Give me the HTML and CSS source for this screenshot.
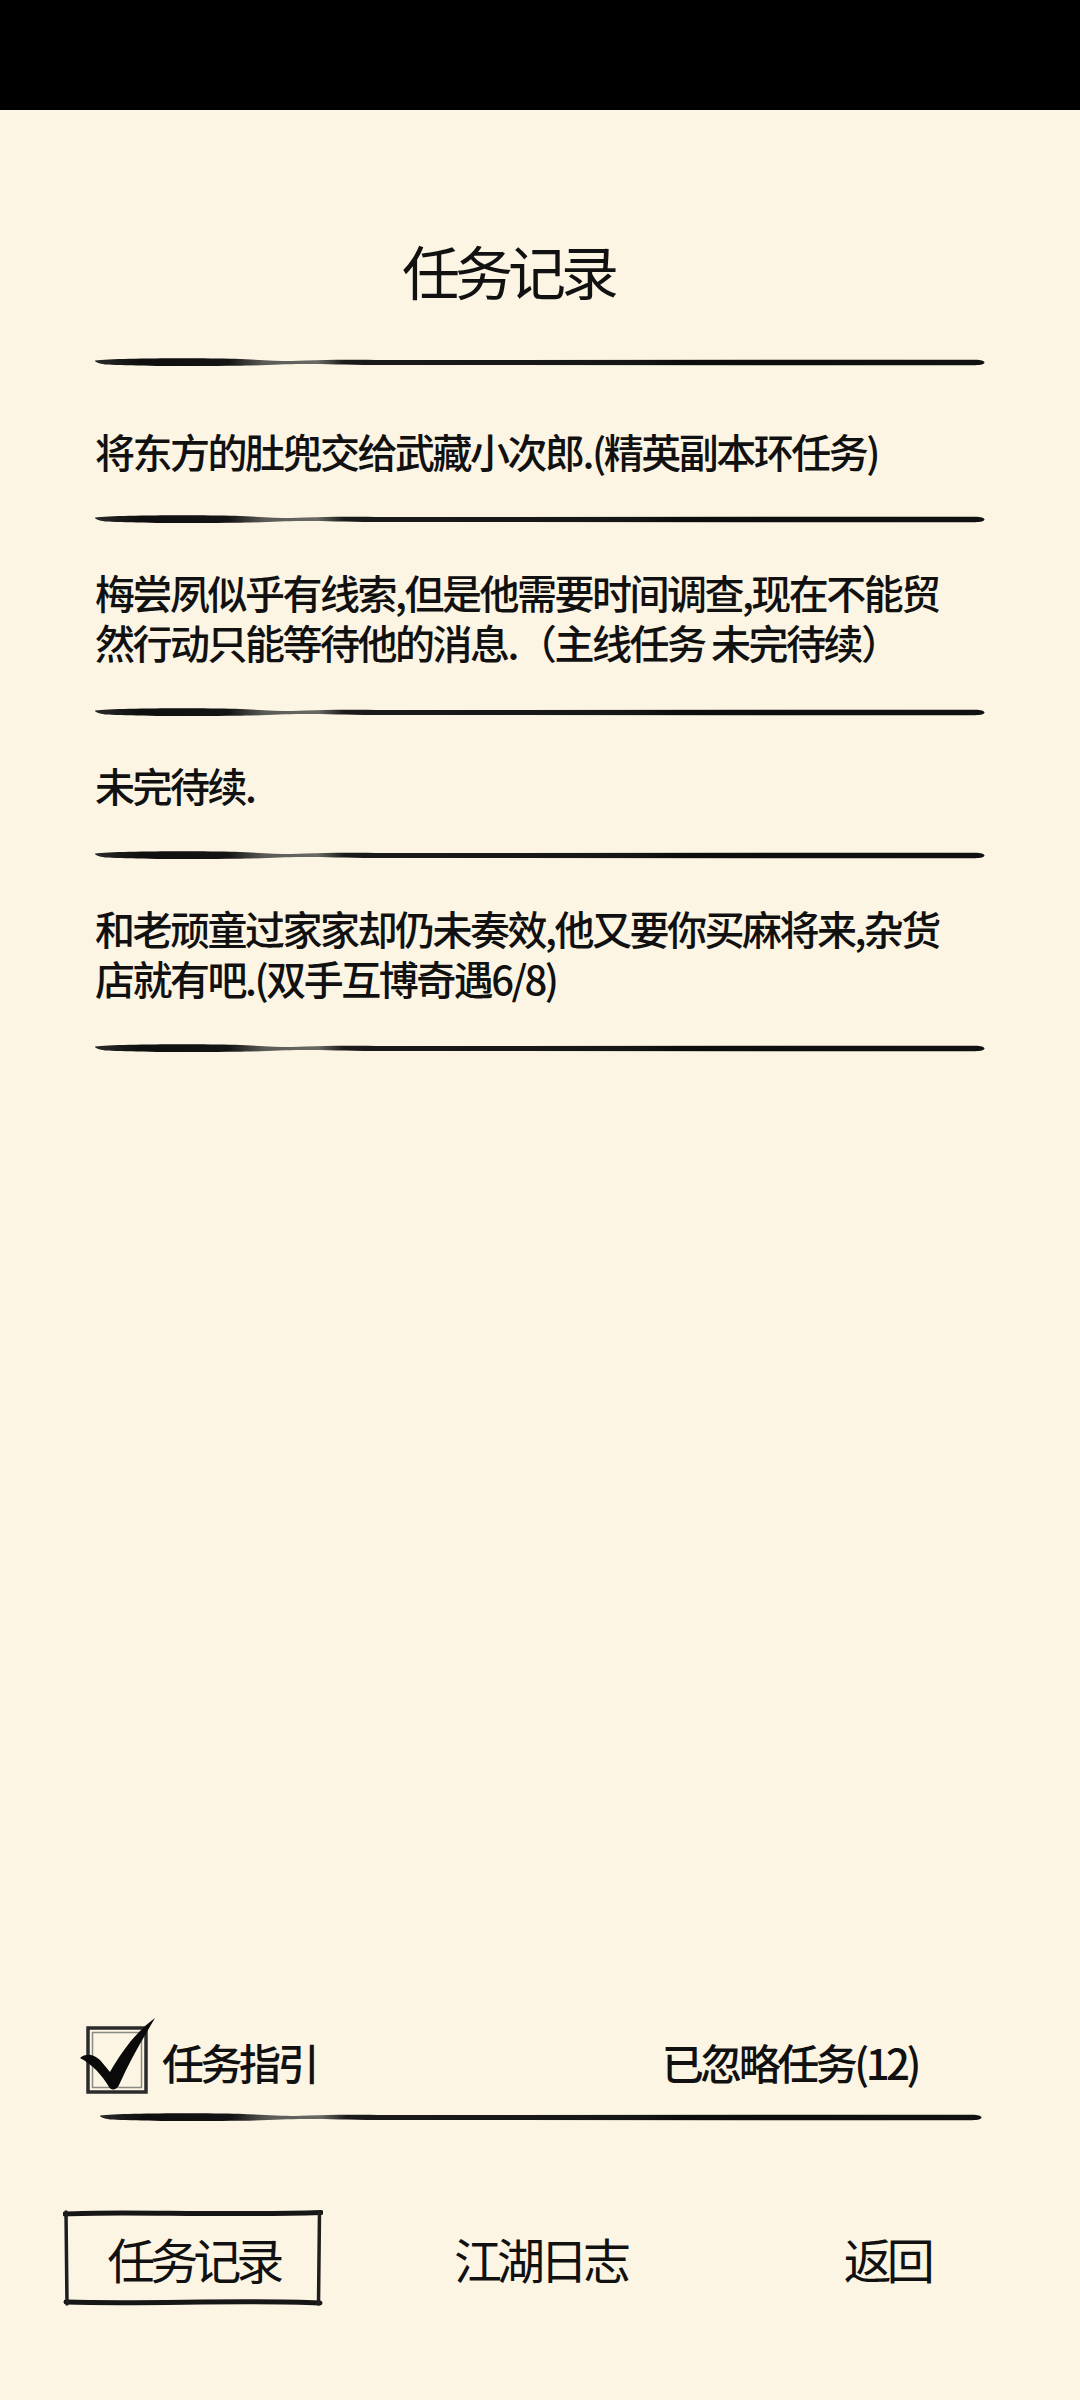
FILE: index.html
```html
<!DOCTYPE html>
<html lang="zh-CN">
<head>
<meta charset="utf-8">
<title>任务记录</title>
<link rel="stylesheet" href="styles.css">
</head>
<body>
<svg class="defs" width="0" height="0" aria-hidden="true">
  <defs>
    <linearGradient id="ink" x1="0" y1="0" x2="1" y2="0">
      <stop offset="0" stop-color="#2a2a2a"/>
      <stop offset="0.05" stop-color="#0e0e0e"/>
      <stop offset="0.15" stop-color="#141414"/>
      <stop offset="0.19" stop-color="#5a5a56"/>
      <stop offset="0.25" stop-color="#6a6a64"/>
      <stop offset="0.28" stop-color="#1a1a1a"/>
      <stop offset="0.6" stop-color="#161616"/>
      <stop offset="0.66" stop-color="#0c0c0c"/>
      <stop offset="1" stop-color="#111"/>
    </linearGradient>
    <symbol id="brush" viewBox="0 0 890 10" preserveAspectRatio="none">
      <path d="M0 3.6 C20 1 100 0.8 140 1.8 C170 3 190 4.6 210 3.6 C230 2.8 250 2.6 280 3 L880 2.8 C886 2.8 889.5 4 889.5 5.6 C889.5 7.2 886 8.2 880 8.2 L280 8 C250 7.8 230 7.2 210 7 C190 6.8 170 8.4 140 8.8 C100 9.4 30 8.8 10 7.4 C4 6.8 0 5.4 0 3.6 Z" fill="url(#ink)"/>
    </symbol>
  </defs>
</svg>

<div class="screen">
  <div class="status-bar"></div>

  <main class="main">
    <h1 class="title">任务记录</h1>
    <div class="list">
      <svg class="divider"><use href="#brush"/></svg>
      <div class="quest quest-first">将东方的肚兜交给武藏小次郎.(精英副本环任务)</div>
      <svg class="divider"><use href="#brush"/></svg>
      <div class="quest">梅尝夙似乎有线索,但是他需要时间调查,现在不能贸然行动只能等待他的消息.（主线任务 未完待续）</div>
      <svg class="divider"><use href="#brush"/></svg>
      <div class="quest">未完待续.</div>
      <svg class="divider"><use href="#brush"/></svg>
      <div class="quest">和老顽童过家家却仍未奏效,他又要你买麻将来,杂货店就有吧.(双手互博奇遇6/8)</div>
      <svg class="divider"><use href="#brush"/></svg>
    </div>
  </main>

  <footer class="footer">
    <div class="options">
      <label class="guide">
        <svg class="checkbox" viewBox="0 0 76 80" width="76" height="80">
          <rect x="8" y="10" width="58" height="64" fill="none" stroke="#2b2b2b" stroke-width="3.5"/>
          <rect x="12.5" y="14.5" width="49" height="55" fill="none" stroke="#8a8a85" stroke-width="1.5"/>
          <path d="M0 40 C6 35 13 36 20 42 L30 54 C42 33 56 14 75 0 C64 19 50 42 39 67 C37 72 31 73 29 69 C22 57 12 46 0 40 Z" fill="#0a0a0a"/>
        </svg>
        <span class="option-text">任务指引</span>
      </label>
      <span class="option-text">已忽略任务(12)</span>
    </div>
    <div class="footer-line">
      <svg class="divider"><use href="#brush"/></svg>
    </div>
    <nav class="tabs">
      <div class="tab tab-active">
        <svg class="frame" viewBox="0 0 260 99" preserveAspectRatio="none">
          <path d="M2 6 C60 2.5 150 8 258 4.5" fill="none" stroke="#161616" stroke-width="5" stroke-linecap="round"/>
          <path d="M3 94 C80 96.5 180 91.5 257 95" fill="none" stroke="#161616" stroke-width="5" stroke-linecap="round"/>
          <path d="M3 4 L4 96" fill="none" stroke="#1e1e1e" stroke-width="3.5" stroke-linecap="round"/>
          <path d="M256.5 4 L255.5 96" fill="none" stroke="#1e1e1e" stroke-width="3.5" stroke-linecap="round"/>
        </svg>
        <span class="tab-text">任务记录</span>
      </div>
      <div class="tab"><span class="tab-text">江湖日志</span></div>
      <div class="tab"><span class="tab-text">返回</span></div>
    </nav>
  </footer>
</div>
</body>
</html>
```

FILE: styles.css
```css
* {
  box-sizing: border-box;
}

html, body {
  margin: 0;
  padding: 0;
}

body {
  width: 1080px;
  height: 2400px;
  background: #fcf5e4;
  color: #111;
  font-family: "Noto Sans CJK SC", "Noto Sans", sans-serif;
  font-weight: 500;
  overflow: hidden;
}

.defs {
  position: absolute;
  width: 0;
  height: 0;
}

.screen {
  display: flex;
  flex-direction: column;
  height: 2400px;
}

.status-bar {
  height: 110px;
  background: #000;
  flex: none;
}

.main {
  flex: 1;
}

.title {
  margin: 131px 0 0 0;
  padding-right: 64px;
  text-align: center;
  font-size: 58px;
  line-height: 58px;
  font-weight: 400;
  letter-spacing: -5px;
}

.list {
  margin: 58px 95px 0 95px;
  display: flex;
  flex-direction: column;
}

.divider {
  display: block;
  width: 890px;
  height: 10px;
}

.quest {
  padding: 43px 30px 40px 0;
  font-size: 40px;
  line-height: 50px;
  letter-spacing: -2.5px;
}

.quest-first {
  padding-top: 59px;
  padding-bottom: 38px;
}

.footer {
  flex: none;
  padding-bottom: 93px;
}

.options {
  height: 85px;
  display: flex;
  align-items: center;
  justify-content: space-between;
  padding: 0 162px 0 80px;
}

.guide {
  display: flex;
  align-items: center;
  gap: 6px;
}

.checkbox {
  display: block;
}

.option-text {
  font-size: 42px;
  line-height: 42px;
  letter-spacing: -3.5px;
  margin-top: 8px;
}

.footer-line {
  margin: 12px 95px 0 100px;
}

.footer-line .divider {
  width: 882px;
}

.tabs {
  margin-top: 86px;
  height: 99px;
  display: grid;
  grid-template-columns: repeat(3, 1fr);
  padding: 0 20px;
}

.tab {
  position: relative;
  justify-self: center;
  width: 260px;
  height: 99px;
  display: flex;
  align-items: center;
  justify-content: center;
}

.frame {
  position: absolute;
  left: 0;
  top: 0;
  width: 260px;
  height: 99px;
}

.tab-text {
  font-size: 48px;
  line-height: 48px;
  letter-spacing: -5px;
  font-weight: 400;
}
```
